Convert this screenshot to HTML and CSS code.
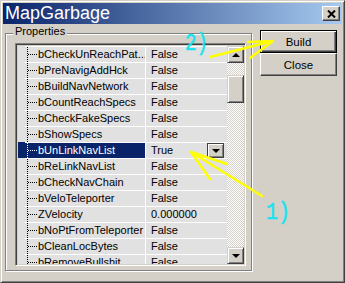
FILE: index.html
```html
<!DOCTYPE html>
<html lang="en">
<head>
  <meta charset="UTF-8" />
  <title>MapGarbage</title>
  <link rel="stylesheet" href="styles.css">
</head>
<body>

  <div class="window">
    <div class="titlebar">
      <span class="title">MapGarbage</span>
      <button class="close-x">
        <svg width="9" height="8" viewBox="0 0 9 8"><path d="M1 0.5 L8 7.5 M8 0.5 L1 7.5" stroke="#000" stroke-width="2"/></svg>
      </button>
    </div>

    <div class="client">
      <div class="group">
        <span class="group-label">Properties</span>
        <div class="list">
          <div class="rows">
            <div class="row"><span class="name">bCheckUnReachPat...</span><span class="val">False</span></div>
            <div class="row"><span class="name">bPreNavigAddHck</span><span class="val">False</span></div>
            <div class="row"><span class="name">bBuildNavNetwork</span><span class="val">False</span></div>
            <div class="row"><span class="name">bCountReachSpecs</span><span class="val">False</span></div>
            <div class="row"><span class="name">bCheckFakeSpecs</span><span class="val">False</span></div>
            <div class="row"><span class="name">bShowSpecs</span><span class="val">False</span></div>
            <div class="row sel"><span class="name">bUnLinkNavList</span><span class="val">True<span class="drop"></span></span></div>
            <div class="row"><span class="name">bReLinkNavList</span><span class="val">False</span></div>
            <div class="row"><span class="name">bCheckNavChain</span><span class="val">False</span></div>
            <div class="row"><span class="name">bVeloTeleporter</span><span class="val">False</span></div>
            <div class="row"><span class="name">ZVelocity</span><span class="val">0.000000</span></div>
            <div class="row"><span class="name">bNoPtFromTeleporter</span><span class="val">False</span></div>
            <div class="row"><span class="name">bCleanLocBytes</span><span class="val">False</span></div>
            <div class="row"><span class="name">bRemoveBullshit</span><span class="val">False</span></div>
          </div>
          <div class="vscroll">
            <div class="sb-btn up"></div>
            <div class="thumb"></div>
            <div class="sb-btn down"></div>
          </div>
        </div>
      </div>

      <div class="buttons">
        <button class="btn default">Build</button>
        <button class="btn">Close</button>
      </div>
    </div>

    <!-- hand-drawn notes on top of the screenshot -->
    <svg class="marks" width="345" height="283" viewBox="0 0 345 283">
      <g stroke="#ffff00" stroke-width="2.5" stroke-linecap="round" fill="none">
        <path d="M210 57 L273 41 M248 42 L273 41 M250 58 L273 41" />
        <path d="M262 196 L191 152 M191 152 L227 164 M191 152 L210 179" />
      </g>
      <text x="185" y="50" textLength="23" lengthAdjust="spacingAndGlyphs" class="note">2)</text>
      <text x="266" y="219" textLength="24" lengthAdjust="spacingAndGlyphs" class="note">1)</text>
    </svg>
  </div>

</body>
</html>
```

FILE: styles.css
```css
body {
  margin: 0;
  font-family: 'Liberation Sans', Arial, sans-serif;
  font-size: 11px;
  color: #000;
}
.window {
  position: relative;
  width: 345px;
  height: 283px;
  box-sizing: border-box;
  background: #d4d0c8;
  border: 1px solid;
  border-color: #d4d0c8 #404040 #404040 #d4d0c8;
  box-shadow: inset 1px 1px 0 #fff, inset -1px -1px 0 #808080;
  padding: 2px;
}
.titlebar {
  height: 21px;
  display: flex;
  align-items: center;
  padding: 0 2px;
  background: linear-gradient(to right, #0a246a, #a6caf0);
}
.title {
  flex: 1;
  color: #fff;
  font-size: 18px;
  line-height: 21px;
}
.close-x {
  width: 18px;
  height: 15px;
  padding: 0;
  display: flex;
  align-items: center;
  justify-content: center;
  background: #d4d0c8;
  border: 1px solid;
  border-color: #fff #404040 #404040 #fff;
  box-shadow: inset -1px -1px 0 #808080;
}
.client {
  display: flex;
  align-items: flex-start;
  padding-left: 2px;
}
.group {
  position: relative;
  margin-top: 9px;
  width: 247px;
  height: 238px;
  box-sizing: border-box;
  border: 1px solid #808080;
  box-shadow: 1px 1px 0 #fff, inset 1px 1px 0 #fff;
  padding: 9px 5px 4px 9px;
}
.group-label {
  position: absolute;
  top: -9px;
  left: 7px;
  padding: 0 2px;
  line-height: 13px;
  background: #d4d0c8;
}
.list {
  height: 223px;
  box-sizing: border-box;
  border: 1px solid;
  border-color: #808080 #fff #fff #808080;
  box-shadow: inset 1px 1px 0 #404040, inset -1px -1px 0 #d4d0c8;
  padding: 2px 1px 1px 2px;
  display: flex;
}
.rows {
  flex: 1;
  overflow: hidden;
  background: #e1e1e1;
}
.row {
  display: flex;
  height: 16px;
  padding-left: 7px;
}
.name {
  position: relative;
  width: 121px;
  box-sizing: border-box;
  border-top: 1px solid #fff;
  border-right: 1px solid #fff;
  padding-left: 13px;
  line-height: 15px;
  white-space: nowrap;
  overflow: hidden;
}
.name::before {
  content: "";
  position: absolute;
  left: 2px;
  top: -1px;
  height: 16px;
  border-left: 1px dotted #000;
}
.name::after {
  content: "";
  position: absolute;
  left: 3px;
  top: 7px;
  width: 9px;
  border-top: 1px dotted #000;
}
.val {
  flex: 1;
  display: flex;
  align-items: center;
  border-top: 1px solid #fff;
  padding-left: 5px;
  line-height: 15px;
}
.row.sel {
  background: #0a246a;
}
.row.sel .name {
  color: #fff;
}
.row.sel .name::before,
.row.sel .name::after {
  border-color: #fff;
}
.row.sel .val {
  background: #e1e1e1;
}
.drop {
  position: relative;
  margin-left: auto;
  margin-right: 3px;
  width: 17px;
  height: 15px;
  box-sizing: border-box;
  background: #d4d0c8;
  border: 1px solid #404040;
  box-shadow: inset 1px 1px 0 #fff, inset -1px -1px 0 #808080;
}
.drop::after,
.sb-btn::after {
  content: "";
  position: absolute;
  left: 50%;
  top: 50%;
  margin-left: -4px;
  margin-top: -2px;
  border-left: 4px solid transparent;
  border-right: 4px solid transparent;
  border-top: 4px solid #000;
}
.vscroll {
  width: 17px;
  display: flex;
  flex-direction: column;
  background-color: #fff;
  background-image:
    linear-gradient(45deg, #d4d0c8 25%, transparent 25%, transparent 75%, #d4d0c8 75%),
    linear-gradient(45deg, #d4d0c8 25%, transparent 25%, transparent 75%, #d4d0c8 75%);
  background-size: 2px 2px;
  background-position: 0 0, 1px 1px;
}
.sb-btn,
.thumb {
  position: relative;
  box-sizing: border-box;
  background: #d4d0c8;
  border: 1px solid;
  border-color: #d4d0c8 #404040 #404040 #d4d0c8;
  box-shadow: inset 1px 1px 0 #fff, inset -1px -1px 0 #808080;
}
.sb-btn {
  height: 17px;
}
.sb-btn.up::after {
  border-top: none;
  border-bottom: 4px solid #000;
}
.thumb {
  height: 28px;
  margin-top: 12px;
}
.sb-btn.down {
  margin-top: auto;
}
.buttons {
  display: flex;
  flex-direction: column;
  margin-top: 6px;
  margin-left: 8px;
}
.btn {
  width: 77px;
  height: 23px;
  padding: 0;
  font-family: 'Liberation Sans', Arial, sans-serif;
  font-size: 11.5px;
  color: #000;
  background: #d4d0c8;
  border: 1px solid;
  border-color: #fff #404040 #404040 #fff;
  box-shadow: inset -1px -1px 0 #808080;
}
.btn.default {
  border-color: #000;
  box-shadow: inset 1px 1px 0 #fff, inset -1px -1px 0 #404040, inset -2px -2px 0 #808080;
}
.marks {
  position: absolute;
  left: -1px;
  top: -1px;
  pointer-events: none;
}
.note {
  font-family: 'Liberation Mono', monospace;
  font-size: 24px;
  fill: #19e3f0;
  stroke: #19e3f0;
  stroke-width: 0.6;
}
```
